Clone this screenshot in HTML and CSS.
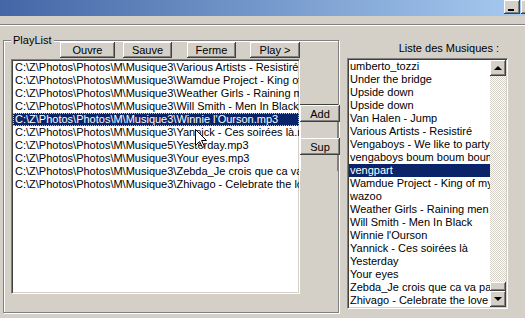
FILE: index.html
```html
<!DOCTYPE html>
<html lang="fr">
<head>
    <meta charset="UTF-8">
    <meta name="viewport" content="width=device-width, initial-scale=1.0">
    <title>PlayList</title>
    <link rel="stylesheet" href="styles.css">
</head>
<body>

    <div class="titlebar">
        <span class="cap-btn"><span class="min-glyph"></span></span>
        <span class="cap-btn"></span>
    </div>
    <div class="menubar"></div>

    <div class="main">
        <div class="group">
            <span class="group-label">PlayList</span>
            <div class="left-part">
                <div class="toolbar">
                    <button class="btn btn-open">Ouvre</button>
                    <button class="btn btn-save">Sauve</button>
                    <button class="btn btn-close">Ferme</button>
                    <button class="btn btn-play">Play &gt;</button>
                </div>
                <ul class="listbox playlist">
                    <li>C:\Z\Photos\Photos\M\Musique3\Various Artists - Resistiré.mp3</li>
                    <li>C:\Z\Photos\Photos\M\Musique3\Wamdue Project - King of my castle.mp3</li>
                    <li>C:\Z\Photos\Photos\M\Musique3\Weather Girls - Raining men.mp3</li>
                    <li>C:\Z\Photos\Photos\M\Musique3\Will Smith - Men In Black.mp3</li>
                    <li class="selected">C:\Z\Photos\Photos\M\Musique3\Winnie l'Ourson.mp3</li>
                    <li>C:\Z\Photos\Photos\M\Musique3\Yannick - Ces soirées là.mp3</li>
                    <li>C:\Z\Photos\Photos\M\Musique5\Yesterday.mp3</li>
                    <li>C:\Z\Photos\Photos\M\Musique3\Your eyes.mp3</li>
                    <li>C:\Z\Photos\Photos\M\Musique3\Zebda_Je crois que ca va pas.mp3</li>
                    <li>C:\Z\Photos\Photos\M\Musique3\Zhivago - Celebrate the love.mp3</li>
                </ul>
            </div>
            <div class="side">
                <div class="side-top"></div>
                <button class="btn side-btn">Add</button>
                <div class="side-gap"></div>
                <button class="btn side-btn">Sup</button>
                <div class="side-gap"></div>
            </div>
        </div>

        <div class="library">
            <div class="library-label">Liste des Musiques :</div>
            <div class="library-box">
                <ul class="library-rows">
                    <li>umberto_tozzi</li>
                    <li>Under the bridge</li>
                    <li>Upside down</li>
                    <li>Upside down</li>
                    <li>Van Halen - Jump</li>
                    <li>Various Artists - Resistiré</li>
                    <li>Vengaboys - We like to party</li>
                    <li>vengaboys boum boum boum</li>
                    <li class="selected">vengpart</li>
                    <li>Wamdue Project - King of my castle</li>
                    <li>wazoo</li>
                    <li>Weather Girls - Raining men</li>
                    <li>Will Smith - Men In Black</li>
                    <li>Winnie l'Ourson</li>
                    <li>Yannick - Ces soirées là</li>
                    <li>Yesterday</li>
                    <li>Your eyes</li>
                    <li>Zebda_Je crois que ca va pas</li>
                    <li>Zhivago - Celebrate the love</li>
                </ul>
                <div class="scrollbar">
                    <span class="sb-btn"><span class="arrow-up"></span></span>
                    <span class="sb-track"></span>
                    <span class="sb-thumb"></span>
                    <span class="sb-btn"><span class="arrow-down"></span></span>
                </div>
            </div>
        </div>
    </div>

    <svg class="cursor" width="12" height="20" viewBox="0 0 12 20">
        <path d="M0.5 0.5 L0.5 16.5 L4.5 12.5 L7.5 18.5 L9.5 17.5 L6.5 11.5 L11.5 11.5 Z" fill="#fff" stroke="#000" stroke-width="1"/>
    </svg>

</body>
</html>
```

FILE: styles.css
```css
* {
    box-sizing: border-box;
}
body {
    margin: 0;
    width: 525px;
    height: 318px;
    overflow: hidden;
    position: relative;
    background: #d4d0c8;
    color: #000;
    font-family: "Liberation Sans", Arial, sans-serif;
    font-size: 11px;
}
.titlebar {
    height: 16px;
    padding-left: 504px;
    display: flex;
    gap: 1px;
    background: linear-gradient(90deg, #4466a6, #a6caf0);
}
.cap-btn {
    position: relative;
    flex: none;
    width: 16px;
    height: 14px;
    background: #d4d0c8;
    box-shadow: inset -1px -1px #404040, inset 1px 1px #fff, inset -2px -2px #808080;
}
.min-glyph {
    position: absolute;
    left: 4px;
    bottom: 3px;
    width: 6px;
    height: 2px;
    background: #000;
}
.menubar {
    height: 9px;
    border-bottom: 1px solid #808080;
    box-shadow: 0 1px #fff;
}
.main {
    display: flex;
    align-items: flex-start;
}

/* PlayList frame */
.group {
    position: relative;
    display: flex;
    width: 336px;
    height: 273px;
    margin: 15px 0 0 3px;
    border: 1px solid #808080;
    box-shadow: inset 1px 1px #fff, 1px 1px #fff;
}
.group-label {
    position: absolute;
    top: -8px;
    left: 7px;
    padding: 0 2px;
    line-height: 14px;
    background: #d4d0c8;
}
.left-part {
    width: 296px;
}
.toolbar {
    display: flex;
    height: 16px;
    margin-top: 1px;
}
.btn {
    height: 16px;
    padding: 0;
    border: none;
    background: #d4d0c8;
    color: #000;
    font: inherit;
    line-height: 15px;
    box-shadow: inset -1px -1px #404040, inset 1px 1px #fff, inset -2px -2px #808080;
}
.btn-open {
    width: 55px;
    margin-left: 56px;
}
.btn-save {
    width: 49px;
    margin-left: 8px;
}
.btn-close {
    width: 49px;
    margin-left: 15px;
}
.btn-play {
    width: 50px;
    margin-left: 14px;
}

.listbox {
    list-style: none;
    width: 289px;
    height: 235px;
    margin: 1px 0 0 7px;
    padding: 1px 0 0 1px;
    overflow: hidden;
    background: #fff;
    border: 1px solid;
    border-color: #808080 #fff #fff #808080;
    box-shadow: inset 1px 1px #404040, inset -1px -1px #d4d0c8;
}
.listbox li {
    height: 13px;
    line-height: 13px;
    padding-left: 2px;
    white-space: nowrap;
    overflow: hidden;
}
.listbox .selected {
    background: #0a246a;
    color: #fff;
    outline: 1px dotted #e8c878;
    outline-offset: -1px;
}

.side {
    display: flex;
    flex-direction: column;
    width: 38px;
}
.side-top {
    height: 64px;
    border-bottom: 1px solid #404040;
}
.side-btn {
    width: 40px;
    height: 17px;
    line-height: 16px;
}
.side-gap {
    height: 16px;
    border-left: 1px solid #fff;
    border-right: 1px solid #808080;
}

/* library list */
.library {
    width: 161px;
    margin-left: 8px;
}
.library-label {
    margin-top: 17px;
    padding-right: 9px;
    line-height: 13px;
    text-align: right;
}
.library-box {
    display: flex;
    height: 251px;
    margin-top: 3px;
    background: #fff;
    border: 1px solid;
    border-color: #808080 #fff #fff #808080;
    box-shadow: inset 1px 1px #404040, inset -1px -1px #d4d0c8;
    padding: 1px;
}
.library-rows {
    flex: 1;
    list-style: none;
    margin: 0;
    padding: 0;
    overflow: hidden;
}
.library-rows li {
    height: 13px;
    line-height: 13px;
    padding-left: 1px;
    white-space: nowrap;
    overflow: hidden;
}
.library-rows .selected {
    background: #0a246a;
    color: #fff;
}
.scrollbar {
    display: flex;
    flex-direction: column;
    width: 16px;
}
.sb-btn, .sb-thumb {
    position: relative;
    display: block;
    height: 16px;
    background: #d4d0c8;
    box-shadow: inset -1px -1px #404040, inset 1px 1px #fff, inset -2px -2px #808080;
}
.sb-thumb {
    height: 9px;
}
.sb-track {
    flex: 1;
    background: repeating-conic-gradient(#fff 0 25%, #d4d0c8 0 50%) 0 0 / 2px 2px;
}
.arrow-up, .arrow-down {
    position: absolute;
    left: 4px;
    width: 0;
    height: 0;
    border-left: 4px solid transparent;
    border-right: 4px solid transparent;
}
.arrow-up {
    top: 6px;
    border-bottom: 4px solid #000;
}
.arrow-down {
    top: 6px;
    border-top: 4px solid #000;
}

.cursor {
    position: absolute;
    left: 195px;
    top: 129px;
}
```
